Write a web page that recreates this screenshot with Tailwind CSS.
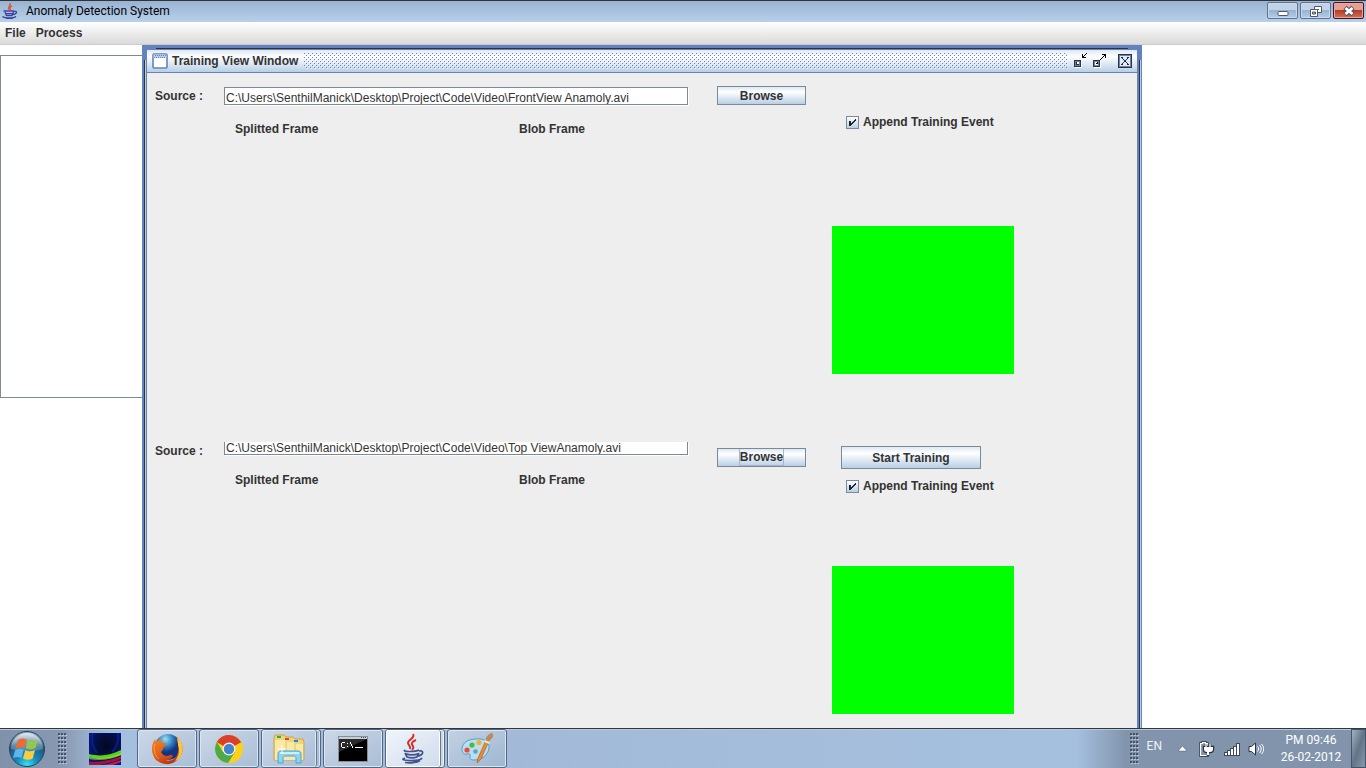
<!DOCTYPE html>
<html lang="en">
<head>
<meta charset="utf-8">
<title>Anomaly Detection System</title>
<script src="https://cdn.jsdelivr.net/npm/@tailwindcss/browser@4"></script>
</head>
<body class="flex h-screen flex-col overflow-hidden bg-white font-['Liberation_Sans',Arial,sans-serif] text-xs text-[#333]">

<!-- Application title bar -->
<header class="flex h-[22px] shrink-0 items-start border-t border-[#333] bg-linear-to-b from-[#98b3d2] to-[#b8d0ea] pr-[2px] pl-[2px]">
  <svg class="mt-px h-[17px] w-4 shrink-0" viewBox="0 0 16 17" fill="none" aria-hidden="true">
    <path d="M7.500 1.500C10 3 5 4.500 7 7.500M10 4C7.500 5 7.500 6 8.500 8" stroke="#e2542c" stroke-width="1.500"/>
    <path d="M2.500 9h9l-1.500 4.500H4.500z" fill="#dfe6f6"/>
    <path d="M1.500 9h10.500M3 10l1.500 3.500h5.500l1.500-3.500M12 9.500c4-1 3 3-1.500 3M3.500 11.500h7M.5 14.500c2 2 11 2 13.500 0M4 16.500h7" stroke="#3c3f9c" stroke-width="1.300"/>
  </svg>
  <h1 class="ml-2 grow font-['Roboto','Noto_Sans',sans-serif] leading-5 text-black">Anomaly Detection System</h1>
  <div class="mt-px flex gap-[2px]">
    <button aria-label="Minimize" class="flex h-[17px] w-[31px] items-center justify-center rounded-[2px] border border-[#60718d] bg-linear-to-b from-[#c0d3e8] from-45% via-[#98b4d0] via-50% to-[#b4cde5] shadow-[inset_0_0_0_1px_#c6d9ed]">
      <svg class="h-3 w-3" viewBox="0 0 12 12"><rect x="1" y="6.500" width="10" height="4" rx="1" fill="#fff" stroke="#535666"/></svg>
    </button>
    <button aria-label="Restore" class="flex h-[17px] w-[31px] items-center justify-center rounded-[2px] border border-[#60718d] bg-linear-to-b from-[#c0d3e8] from-45% via-[#98b4d0] via-50% to-[#b4cde5] shadow-[inset_0_0_0_1px_#c6d9ed]">
      <svg class="h-3 w-3" viewBox="0 0 12 12"><path d="M4.500 1.500h7v6h-7z" fill="#fff" stroke="#535666"/><path d="M7.500 4.500h1.500" stroke="#535666"/><path d="M.5 4.500h7v7h-7z" fill="#fff" stroke="#535666"/><path d="M2.500 7h3v2h-3z" fill="#98b4d0" stroke="#535666"/></svg>
    </button>
    <button aria-label="Close" class="flex h-[17px] w-[31px] items-center justify-center rounded-[2px] border border-[#4b1022] bg-linear-to-b from-[#e3a093] from-45% via-[#b73c26] via-50% to-[#cf6f58] shadow-[inset_0_0_0_1px_#e5a99c]">
      <svg class="h-3 w-3" viewBox="0 0 12 12"><path d="M2 2.500l8 7M10 2.500l-8 7" stroke="#535666" stroke-width="4.800"/><path d="M2.500 3l7 6M9.500 3l-7 6" stroke="#fff" stroke-width="2.800"/></svg>
    </button>
  </div>
</header>

<nav class="flex h-[23px] shrink-0 items-start gap-[10px] border-b border-[#ccc] bg-linear-to-b from-white to-[#dadada] px-[5px] font-bold leading-[22px]">
  <button>File</button>
  <button>Process</button>
</nav>

<!-- Desktop pane -->
<main class="relative min-h-0 grow overflow-hidden bg-white">
  <div class="mt-[10px] h-[343px] w-[150px] border border-[#7a8a99] bg-white"></div>

  <section class="absolute top-0 left-[142px] flex h-[760px] w-[1000px] flex-col border-2 border-[#6382bf] bg-[#6382bf]" aria-label="Training View Window">
    <div class="absolute -inset-px top-0 border border-transparent">
      <div class="absolute top-0 right-3 left-3 h-px bg-[#333]"></div>
      <div class="absolute top-3 bottom-0 left-0 w-px bg-[#333]"></div>
      <div class="absolute top-3 right-0 bottom-0 w-px bg-[#333]"></div>
      <div class="absolute top-3 left-px bottom-0 w-px bg-[#b8cfe5]"></div>
      <div class="absolute top-3 -right-px bottom-0 w-px bg-[#b8cfe5]"></div>
    </div>
    <div class="mx-[3px] mt-[3px] flex h-[23px] shrink-0 items-center border-b border-[#6382bf] bg-linear-to-b from-[#dde8f3] via-white via-30% to-[#b8cfe5] pr-1 pl-[5px]">
      <svg class="h-4 w-4 shrink-0" viewBox="0 0 16 16" aria-hidden="true">
        <rect x="1" y="1" width="14" height="14" rx="1" fill="#fff" stroke="#6382bf" stroke-width="1.600"/>
        <path d="M1.500 1.500h13v3.500h-13z" fill="#b8cfe5"/><path d="M3 2.500h11M2 4.500h11" stroke="#6382bf" stroke-dasharray="1 1"/>
      </svg>
      <h2 class="ml-1 shrink-0 font-bold leading-4">Training View Window</h2>
      <svg class="ml-[6px] h-4 min-w-0 grow" aria-hidden="true">
        <defs><pattern id="bumps" width="4" height="4" patternUnits="userSpaceOnUse"><path d="M0 0h1v1H0zM2 2h1v1H2z" fill="#6382bf"/><path d="M1 1h1v1H1zM3 3h1v1H3z" fill="#fff"/></pattern></defs>
        <rect width="100%" height="100%" fill="url(#bumps)"/>
      </svg>
      <button aria-label="Iconify" class="ml-[5px]">
        <svg class="h-4 w-4" viewBox="0 0 16 16" shape-rendering="crispEdges"><path d="M2 8h7v7H2z" fill="#fff"/><path d="M1 7h7v7H1z" fill="#333"/><path d="M2 8h5v5H2z" fill="#6382bf"/><path d="M3 9h3v3H3z" fill="#222b44"/><path d="M4 9h2v2H4z" fill="#fff"/><path d="M9 1h1v4H9zM9 4h4v1H9zM10 3h1v1h-1zM11 2h1v1h-1zM12 1h1v1h-1zM13 0h1v1h-1z" fill="#000"/></svg>
      </button>
      <button aria-label="Maximize" class="ml-[3px]">
        <svg class="h-4 w-4" viewBox="0 0 16 16" shape-rendering="crispEdges"><path d="M2 8h7v7H2z" fill="#fff"/><path d="M1 7h7v7H1z" fill="#333"/><path d="M2 8h5v5H2z" fill="#6382bf"/><path d="M3 9h3v3H3z" fill="#fff"/><path d="M10 1h4v1h-4zM13 1h1v4h-1zM12 2h1v1h-1zM11 3h1v1h-1zM10 4h1v1h-1zM9 5h1v1H9zM8 6h1v1H8zM5 9h1v1H5zM4 10h2v1H4z" fill="#000"/></svg>
      </button>
      <button aria-label="Close frame" class="ml-[9px]">
        <svg class="h-4 w-4" viewBox="0 0 16 16" shape-rendering="crispEdges"><path d="M2 2h13v13H2z" fill="#fff"/><path d="M1 1h14v14H1z" fill="#333"/><path d="M2 2h12v12H2z" fill="#6382bf"/><path d="M3 3h10v10H3z" fill="#e2ebf5"/>
        <path d="M4 4h2v1H4zM5 5h1v1H5zM6 6h1v1H6zM7 7h2v2H7zM6 9h1v1H6zM5 10h1v1H5zM4 11h2v1H4zM10 4h2v1h-2zM10 5h1v1h-1zM9 6h1v1H9zM9 9h1v1H9zM10 10h1v1h-1zM10 11h2v1h-2z" fill="#222b44"/></svg>
      </button>
    </div>

    <div class="mx-[3px] grow bg-[#eee]">
      <form class="flex h-[369px] items-start pt-[13px] pl-2">
        <div class="w-[533px]">
          <div class="flex items-start">
            <label for="front" class="w-[69px] font-bold leading-5">Source :</label>
            <input id="front" type="text" value="C:\Users\SenthilManick\Desktop\Project\Code\Video\FrontView Anamoly.avi" class="mt-px h-[18px] min-w-0 grow border border-[#7a8a99] bg-white pt-[3px] pl-px leading-3 shadow-[1px_1px_0_#fff] outline-none">
          </div>
          <div class="mt-[13px] flex pl-20 font-bold leading-5">
            <h3 class="w-[284px]">Splitted Frame</h3>
            <h3>Blob Frame</h3>
          </div>
        </div>
        <button type="button" class="ml-[29px] h-[19px] w-[89px] border border-[#7a8a99] bg-linear-to-b from-[#dde8f3] via-white via-30% to-[#b8cfe5] font-bold leading-4">Browse</button>
        <div class="ml-[26px] pt-[26px]">
          <label class="ml-[14px] flex items-center gap-1 font-bold leading-5">
            <span class="relative flex"><input type="checkbox" checked class="h-[13px] w-[13px] appearance-none border border-[#7a8a99] bg-linear-to-b from-white to-[#b8cfe5]">
              <svg class="pointer-events-none absolute inset-0 h-[13px] w-[13px]" viewBox="0 0 13 13" shape-rendering="crispEdges"><path d="M3 5h2v2h1V6h1V5h1V4h1V3h1v2H9v1H8v1H7v1H6v1H5v1H3z" fill="#222"/></svg></span>
            Append Training Event
          </label>
          <div class="mt-[94px] h-[148px] w-[182px] bg-[#0f0]"></div>
        </div>
      </form>

      <form class="flex items-start pl-2">
        <div class="w-[533px]">
          <div class="flex items-start">
            <label for="top" class="w-[69px] font-bold leading-[18px]">Source :</label>
            <input id="top" type="text" value="C:\Users\SenthilManick\Desktop\Project\Code\Video\Top ViewAnamoly.avi" class="h-[13px] min-w-0 grow border border-t-0 border-[#7a8a99] bg-white pl-px leading-3 shadow-[1px_1px_0_#fff] outline-none">
          </div>
          <div class="mt-[10px] flex pl-20 font-bold leading-5">
            <h3 class="w-[284px]">Splitted Frame</h3>
            <h3>Blob Frame</h3>
          </div>
        </div>
        <button type="button" class="mt-[6px] ml-[29px] flex h-[19px] w-[89px] justify-center border border-[#7a8a99] bg-linear-to-b from-[#dde8f3] via-white via-30% to-[#b8cfe5] font-bold"><span class="border border-t-0 border-[#a3b8cc] leading-4">Browse</span></button>
        <div class="ml-[26px] pt-1">
          <button type="button" class="ml-[9px] block h-[23px] w-[140px] border border-[#7a8a99] bg-linear-to-b from-[#dde8f3] via-white via-30% to-[#b8cfe5] font-bold leading-5">Start Training</button>
          <label class="mt-[7px] ml-[14px] flex items-center gap-1 font-bold leading-5">
            <span class="relative flex"><input type="checkbox" checked class="h-[13px] w-[13px] appearance-none border border-[#7a8a99] bg-linear-to-b from-white to-[#b8cfe5]">
              <svg class="pointer-events-none absolute inset-0 h-[13px] w-[13px]" viewBox="0 0 13 13" shape-rendering="crispEdges"><path d="M3 5h2v2h1V6h1V5h1V4h1V3h1v2H9v1H8v1H7v1H6v1H5v1H3z" fill="#222"/></svg></span>
            Append Training Event
          </label>
          <div class="mt-[70px] h-[148px] w-[182px] bg-[#0f0]"></div>
        </div>
      </form>
    </div>
  </section>
</main>

<!-- Taskbar -->
<footer class="flex h-10 shrink-0 items-stretch border-t border-[#30363f] bg-[linear-gradient(90deg,#8091aa_0,#8798b0_60px,#a5bfde_110px,#a2bad7_500px,#a5c0df_calc(100%-290px),#8294ac_calc(100%-240px),#8294ac)] font-['Roboto','Noto_Sans',sans-serif] shadow-[inset_0_1px_0_#b9c9dc]">
  <button aria-label="Start" class="ml-2 flex items-center">
    <svg class="h-[38px] w-[38px]" viewBox="0 0 38 38">
      <defs>
        <radialGradient id="orb" cx=".5" cy=".95" r=".9"><stop offset="0" stop-color="#35e3f5"/><stop offset=".35" stop-color="#1687bb"/><stop offset=".75" stop-color="#245478"/><stop offset="1" stop-color="#90b3cc"/></radialGradient>
        <linearGradient id="shine" x2="0" y2="1"><stop stop-color="#fff" stop-opacity=".7"/><stop offset="1" stop-color="#fff" stop-opacity=".15"/></linearGradient>
      </defs>
      <circle cx="19" cy="19" r="17.500" fill="url(#orb)" stroke="#26445c"/>
      <path d="M3 19a16 16 0 0 1 32 0c-9 3-22 3-32 0z" fill="url(#shine)"/>
      <path d="M10 10c3-2 6-2 8.500-.5l-2.200 8.500c-3-1.300-5.500-1-8.500.5z" fill="#ee6b31"/>
      <path d="M20 10c3 1.500 6 1.500 10-.5l-2.500 8.500c-3 1.800-6.500 1.800-9.700.3z" fill="#93c84c"/>
      <path d="M7.200 20c3-1.700 5.500-1.700 8.500-.3l-2.200 8.300c-3-1.400-5.500-1.200-8.500.3z" fill="#5fb4e8"/>
      <path d="M17.200 20.200c3 1.500 6.500 1.500 9.800-.3l-2.300 8.600c-3 1.700-6.500 1.500-9.700 0z" fill="#fccb3f"/>
    </svg>
  </button>
  <svg class="mt-1 ml-3 h-8 w-[10px]" aria-hidden="true"><defs><pattern id="grip" width="3" height="4" patternUnits="userSpaceOnUse"><path d="M0 0h2v2H0z" fill="#46546a"/><path d="M1 2h2v1H1z" fill="#b6c4d6"/></pattern></defs><rect width="9" height="31" fill="url(#grip)"/></svg>
  <button aria-label="Aurora" class="ml-[21px] flex items-center">
    <svg class="h-8 w-8" viewBox="0 0 32 32">
      <defs><radialGradient id="sky" cx=".55" cy=".4" r=".6"><stop stop-color="#03081f"/><stop offset=".7" stop-color="#04104e"/><stop offset="1" stop-color="#051a86"/></radialGradient></defs>
      <path d="M0 0h32v32H0z" fill="url(#sky)"/><path d="M4 0C2 8 4 15 8 20M29 0c1 8-1 14-6 19" stroke="#0a23a0" stroke-width="2" fill="none" opacity=".7"/>
      <path d="M0 21c12 3 22 1 32-4v5C22 26 10 27 0 24z" fill="#52d51c"/><path d="M0 24c12 2 22 1 32-4v2C22 27 10 28 0 26z" fill="#c5e620" opacity=".6"/>
      <path d="M0 29c12 0 22-2 32-6v3c-9 4-14 4-21 6H0z" fill="#9d1440"/><path d="M14 32c6-1 12-3 18-5v2c-3 1-5 2-8 3z" fill="#c91f4c"/>
    </svg>
  </button>
  <div class="ml-4 flex gap-[2px]">
    <button aria-label="Firefox" class="flex w-[60px] items-center justify-center rounded-[3px] border border-[#55677f] bg-linear-to-br from-[#ccd8e8] to-[#a9bdd6] shadow-[inset_0_0_0_1px_#dce6f2]">
      <svg class="h-8 w-8" viewBox="0 0 32 32">
        <defs><radialGradient id="globe" cx=".4" cy=".2"><stop stop-color="#9cddf5"/><stop offset=".6" stop-color="#2b7bbf"/><stop offset="1" stop-color="#16347b"/></radialGradient><linearGradient id="fox" x2=".5" y2="1"><stop stop-color="#f58a25"/><stop offset=".6" stop-color="#e2601b"/><stop offset="1" stop-color="#b93812"/></linearGradient></defs>
        <circle cx="17" cy="14" r="13" fill="url(#globe)"/>
        <path d="M26 4c5 4 7 10 5 16-3 8-10 12-17 11C6 30 1 24 1 16c0-4 1-7 3-10l1 3c2-2 4-3 6-3-1 2-1 3 0 4 2 0 4 0 5 1-1 2-3 2-4 4 0 2-1 3-2 4 2 4 6 5 9 3 1 0 3 0 3 1-2 4-5 4-7 4 6 2 11-2 12-8 1-5 0-9-1-11z" fill="url(#fox)"/>
        <path d="M26 4c5 4 7 10 5 16-1 4-4 7-7 8 4-5 5-11 3-16 0-3 0-5-1-8z" fill="#fbc63c"/>
        <path d="M4 11c-2 6 0 12 4 15" stroke="#f9a03a" fill="none"/>
      </svg>
    </button>
    <button aria-label="Chrome" class="flex w-[60px] items-center justify-center rounded-[3px] border border-[#55677f] bg-linear-to-br from-[#ccd8e8] to-[#a9bdd6] shadow-[inset_0_0_0_1px_#dce6f2]">
      <svg class="h-[30px] w-[30px]" viewBox="0 0 30 30">
        <circle cx="15" cy="15" r="14" fill="#fcd116"/>
        <path d="M15 15L2.900 8A14 14 0 0 1 27.100 8H15z" fill="#db3f2e"/><path d="M15 8h12.500L15 15 3 8a14 14 0 0 1 12-7z" fill="#db3f2e"/>
        <path d="M2.900 8A14 14 0 0 0 14 29l7-11-12 0z" fill="#4caa49"/>
        <circle cx="15" cy="15" r="6.500" fill="#f3f5f6"/><circle cx="15" cy="15" r="5.200" fill="#4384cb"/>
      </svg>
    </button>
    <div class="flex w-[60px] rounded-[3px] border border-[#55677f] bg-[#a9bdd6] pr-[3px] shadow-[inset_0_0_0_1px_#dce6f2]">
      <button aria-label="Explorer" class="flex grow items-center justify-center rounded-[3px] border-r border-[#65788f] bg-linear-to-br from-[#ccd8e8] to-[#a9bdd6] shadow-[inset_0_0_0_1px_#dce6f2]">
        <svg class="h-8 w-8" viewBox="0 0 32 32">
          <path d="M1 5l1-3h9l2 2h7l2 2h8l1 3v18H1z" fill="#f0d577" stroke="#c9a548"/><path d="M4 3h4v2H4z" fill="#29b43a"/><path d="M12 5h4v2h-4z" fill="#d8482d"/><path d="M21 7h4v2h-4z" fill="#2586d6"/>
          <path d="M2 7h9l2 2h7l2 2h8v16H2z" fill="#f9e9a6"/><path d="M22 11v8M13 9v9" stroke="#dfc26a"/>
          <path d="M5 30v-9c0-2 1-3 3-3h17c2 0 3 1 3 3v9h-5v-5c0-1-1-2-2-2h-9c-1 0-2 1-2 2v5z" fill="#8fd3f1" stroke="#4aa5d2"/><path d="M7 20h19" stroke="#dff6ff" stroke-width="1.500"/><path d="M9 12v9M5 16h8" stroke="#fff"/>
        </svg>
      </button>
    </div>
    <button aria-label="Command Prompt" class="flex w-[60px] items-center justify-center rounded-[3px] border border-[#55677f] bg-linear-to-br from-[#ccd8e8] to-[#a9bdd6] shadow-[inset_0_0_0_1px_#dce6f2]">
      <svg class="h-[26px] w-[30px]" viewBox="0 0 30 26" shape-rendering="crispEdges">
        <path d="M0 0h30v26H0z" fill="#8b8f94"/><path d="M1 1h28v2H1z" fill="#c4cfda"/><path d="M23 1h1v1h-1zM25 1h1v1h-1zM27 1h1v1h-1z" fill="#45536c"/><path d="M1 3h28v22H1z" fill="#000"/><path d="M1 3h28L1 16z" fill="#2b2b2b"/>
        <path d="M4 6h3v1H4zM3 7h1v4H3zM4 11h3v1H4zM9 7h1v1H9zM9 10h1v1H9zM12 6h1v2h-1zM13 8h1v2h-1zM14 10h1v2h-1zM17 11h8v1h-8z" fill="#fff"/>
      </svg>
    </button>
    <div class="flex w-[60px] rounded-[3px] border border-[#55677f] bg-[#cad7e7] pr-[3px] shadow-[inset_0_0_0_1px_#eef3f9]">
      <button aria-label="Java application" class="flex grow items-center justify-center rounded-[3px] border-r border-[#65788f] bg-linear-to-br from-[#f0f5fb] to-[#cfdcec] shadow-[inset_0_0_0_1px_#fff]">
        <svg class="h-8 w-8" viewBox="0 0 32 32" fill="none">
          <path d="M16 1c3 4-6 6-5 9 0 2 3 3 2 6M19 7c-5 2-5 4-3 6 1 2 0 3-1 4" stroke="#dc2926" stroke-width="1.900"/>
          <path d="M8 17c-4 2 11 2 14 0M8 20l2 4c3 1 7 1 10 0l2-4M22 18c6-1 4 5-2 5M8 25c-9 3 15 4 17 0M8 29.500c5 1 12 0 15-2" stroke="#43538f" stroke-width="1.700"/>
          <path d="M9 21c3 1 9 1 12 0" stroke="#43538f" stroke-width="2"/>
        </svg>
      </button>
    </div>
    <button aria-label="Paint" class="flex w-[60px] items-center justify-center rounded-[3px] border border-[#55677f] bg-linear-to-br from-[#c3d2e4] to-[#9fb6d1] shadow-[inset_0_0_0_1px_#dce6f2]">
      <svg class="h-8 w-8" viewBox="0 0 32 32">
        <path d="M15 6c8-1 14 3 13 9-1 7-7 12-15 12-4 0-4-2-4-4 1-2-1-3-3-2-3 1-5-1-5-5C1 10 7 6 15 6z" fill="#b6e0f4" stroke="#5d9cbf"/>
        <circle cx="6" cy="17" r="2.600" fill="#e54c3c"/><circle cx="11" cy="12" r="2.600" fill="#4cb848"/><circle cx="18" cy="9.500" r="2.600" fill="#f6b02b"/><circle cx="14.500" cy="18.500" r="2.300" fill="#6f9cb8"/>
        <path d="M16 30l1-5 8-18 3 1-8 18z" fill="#ee8a34" stroke="#b65e20" stroke-width=".7"/><path d="M25 7c-1-3 2-5 5-7 2 0 3 2 2 4-2 2-3 4-4 4z" fill="#b98d58"/><path d="M24 7l5 2-1 2-5-2z" fill="#dfe4e8"/>
      </svg>
    </button>
  </div>
  <div class="grow"></div>
  <svg class="mt-1 h-8 w-[10px]" aria-hidden="true"><rect width="9" height="31" fill="url(#grip)"/></svg>
  <button class="ml-[7px] h-[34px] text-[#eef3f8]">EN</button>
  <button aria-label="Show hidden icons" class="ml-4 flex items-center"><svg class="h-[6px] w-[9px]" viewBox="0 0 9 6"><path d="M0 5l4.500-5L9 5z" fill="#fff" stroke="#4d5b6f" stroke-width=".5"/></svg></button>
  <button aria-label="Power" class="ml-3 flex items-center"><svg class="h-4 w-4" viewBox="0 0 16 16"><path d="M1.500 2.500h2v-1h3v1h2v12h-7z" fill="#8294ac" stroke="#2b3442" stroke-width="2.600"/><path d="M1.500 2.500h2v-1h3v1h2v12h-7z" fill="#8294ac" stroke="#fff" stroke-width="1.200"/><path d="M7 3v3M11 3v3M5 6h9v2c0 2-1 3-3 3H8c-2 0-3-1-3-3zM9 11v4" stroke="#2b3442" stroke-width="2.500"/><path d="M7 3v3M11 3v3" stroke="#fff" stroke-width="1.300"/><path d="M5 6h9v2c0 2-1 3-3 3h-1v3H8v-3c-2 0-3-1-3-3z" fill="#fff"/></svg></button>
  <button aria-label="Network" class="ml-[9px] flex items-center"><svg class="h-4 w-4" viewBox="0 0 16 16" shape-rendering="crispEdges"><path d="M0 11h4v4H0zM3 9h4v6H3zM6 7h4v8H6zM9 5h4v10H9zM12 2h4v13h-4z" fill="#3d495b"/><path d="M1 12h2v2H1zM4 10h2v4H4zM7 8h2v6H7zM10 6h2v8h-2zM13 3h2v11h-2z" fill="#fff"/></svg></button>
  <button aria-label="Volume" class="ml-2 flex items-center"><svg class="h-4 w-4" viewBox="0 0 16 16" fill="none"><path d="M1 5.500h2.500L7.500 2v12l-4-3.500H1z" fill="#fff" stroke="#2b3442"/><path d="M9.500 5.500c1.500 1.500 1.500 3.500 0 5M11.500 4c2.300 2.300 2.300 5.700 0 8M13.500 3c3 3 3 7 0 10" stroke="#fff"/></svg></button>
  <time class="ml-[14px] w-[66px] pt-[3px] text-center leading-[17px] text-white">PM 09:46<br>26-02-2012</time>
  <button aria-label="Show desktop" class="ml-[7px] w-[15px] border border-[#46546a] bg-linear-to-br from-[#a3b0c1] via-[#637488] via-50% to-[#8798ac]"></button>
</footer>
</body>
</html>
